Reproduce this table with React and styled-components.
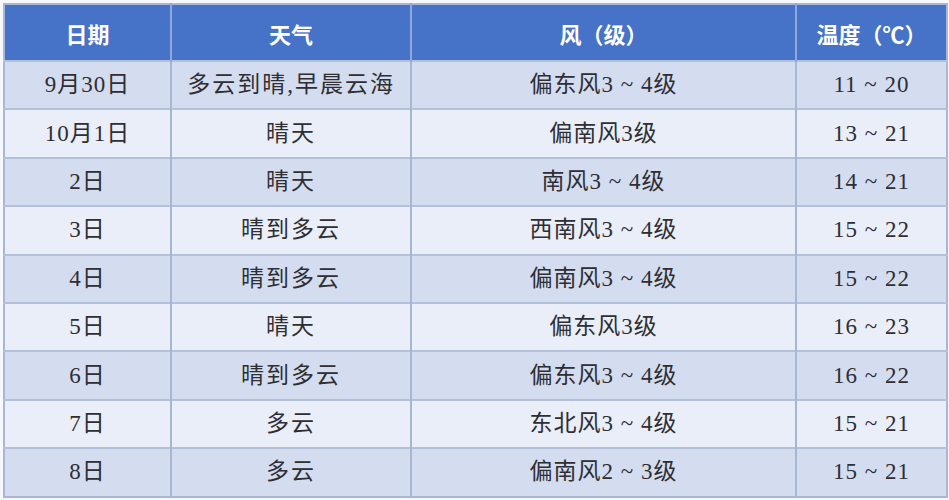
import styled, { createGlobalStyle } from "styled-components";

const GlobalStyle = createGlobalStyle`
	html, body {
		margin: 0;
		padding: 0;
		background: #f7f8fc;
	}
`
const Wrap = styled.div`
	padding: 3px 3px 4px 3px;
	width: 949px;
	height: 500px;
	box-sizing: border-box;
`
const Table = styled.table`
	width: 943px;
	border-collapse: collapse;
	table-layout: fixed;
	border: 2px solid #a8b7d6;
`
const HeadCell = styled.th`
	height: 55px;
	padding: 0;
	background: #4672c8;
	color: #fff;
	font-family: "Noto Sans CJK SC", "Liberation Sans", sans-serif;
	font-weight: 700;
	font-size: 22px;
	text-align: center;
	border-right: 2px solid #8ea8dc;
	&:last-child {
		border-right: none;
	}
`
const Row = styled.tr`
	background: ${props => props.dark ? "#d3ddef" : "#eaeef8"};
`
const Cell = styled.td`
	height: 46.4px;
	padding: 0;
	line-height: 30px;
	text-align: center;
	color: #2e2e33;
	font-family: "Liberation Serif", "Noto Sans CJK SC", serif;
	font-size: 23px;
	letter-spacing: ${props => props.spaced ? "2px" : "1px"};
	border-top: 2px solid #b3c0da;
	border-right: 2px solid #a9b6d2;
	&:last-child {
		border-right: none;
	}
`

const rows = [
	["9月30日", "多云到晴,早晨云海", "偏东风3 ~ 4级", "11 ~ 20"],
	["10月1日", "晴天", "偏南风3级", "13 ~ 21"],
	["2日", "晴天", "南风3 ~ 4级", "14 ~ 21"],
	["3日", "晴到多云", "西南风3 ~ 4级", "15 ~ 22"],
	["4日", "晴到多云", "偏南风3 ~ 4级", "15 ~ 22"],
	["5日", "晴天", "偏东风3级", "16 ~ 23"],
	["6日", "晴到多云", "偏东风3 ~ 4级", "16 ~ 22"],
	["7日", "多云", "东北风3 ~ 4级", "15 ~ 21"],
	["8日", "多云", "偏南风2 ~ 3级", "15 ~ 21"],
]

function App() {
	return (
		<Wrap>
			<GlobalStyle />
			<Table>
				<colgroup>
					<col style={{ width: 167 }} />
					<col style={{ width: 240 }} />
					<col style={{ width: 385 }} />
					<col style={{ width: 151 }} />
				</colgroup>
				<thead>
					<tr>
						<HeadCell>日期</HeadCell>
						<HeadCell>天气</HeadCell>
						<HeadCell>风（级）</HeadCell>
						<HeadCell>温度（℃）</HeadCell>
					</tr>
				</thead>
				<tbody>
					{rows.map((r, i) => (
						<Row key={i} dark={i % 2 === 0}>
							<Cell>{r[0]}</Cell>
							<Cell spaced>{r[1]}</Cell>
							<Cell>{r[2]}</Cell>
							<Cell>{r[3]}</Cell>
						</Row>
					))}
				</tbody>
			</Table>
		</Wrap>
	)
}

export default App;
